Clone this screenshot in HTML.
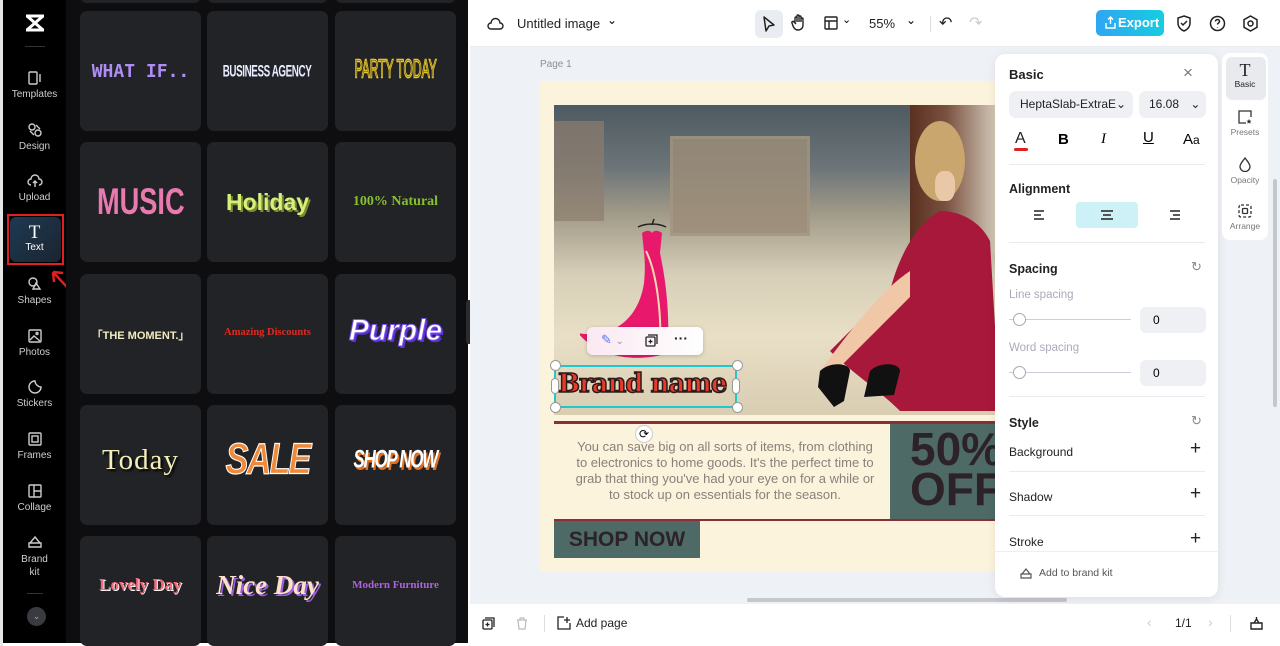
<!DOCTYPE html>
<html><head><meta charset="utf-8"><style>
*{margin:0;padding:0;box-sizing:border-box}
body{width:1280px;height:646px;overflow:hidden;background:#fff;font-family:"Liberation Sans",sans-serif;position:relative}
.abs{position:absolute}
.rail{left:3px;top:0;width:63px;height:643px;background:#000}
.ri{position:absolute;left:0;width:63px;text-align:center;color:#cfcfcf;font-size:10px}
.ri svg{display:block;margin:0 auto 3px}
.panel{left:66px;top:0;width:402px;height:643px;background:#0e0e10}
.card{position:absolute;width:121px;height:120px;background:#222327;border-radius:7px;display:flex;align-items:center;justify-content:center;text-align:center;font-weight:bold;white-space:nowrap;overflow:hidden}
.card span{display:inline-block}
.top{left:470px;top:0;width:810px;height:47px;background:#fff;border-bottom:1px solid #e8ebef}
.main{left:470px;top:47px;width:810px;height:557px;background:#eef1f5}
.bot{left:470px;top:604px;width:807px;height:39px;background:#fff}
.ptxt{font-size:13px;color:#222}
.sec{font-size:12.5px;font-weight:bold;color:#222}
.lbl{font-size:12px;color:#222}
.hr{position:absolute;left:14px;width:196px;height:1px;background:#e8eaee}
</style></head><body>
<div class="abs rail">
 <svg class="abs" style="left:20px;top:12px" width="24" height="22" viewBox="0 0 24 22"><path d="M3 4h18M3 18h18M4 4l16 14M20 4L4 18" stroke="#fff" stroke-width="3" fill="none"/></svg>
 <div class="abs" style="left:22px;top:46px;width:20px;height:1px;background:#333"></div>
 <div class="ri" style="top:70px"><svg width="16" height="16" viewBox="0 0 16 16" fill="none" stroke="#ccc" stroke-width="1.4"><rect x="2" y="2" width="8" height="12" rx="1"/><path d="M13 4v8"/></svg>Templates</div>
 <div class="ri" style="top:122px"><svg width="16" height="16" viewBox="0 0 16 16" fill="none" stroke="#ccc" stroke-width="1.4"><circle cx="5" cy="5" r="3"/><circle cx="11" cy="11" r="3"/><path d="M9 3l4 4M3 9l4 4"/></svg>Design</div>
 <div class="ri" style="top:173px"><svg width="16" height="16" viewBox="0 0 16 16" fill="none" stroke="#ccc" stroke-width="1.4"><path d="M4 12a3 3 0 010-6 4 4 0 018 0 3 3 0 010 6M8 8v6M6 10l2-2 2 2"/></svg>Upload</div>
 <div class="abs" style="left:4px;top:214px;width:57px;height:51px;border:2px solid #e02020"></div>
 <div class="abs" style="left:7px;top:217px;width:51px;height:45px;background:linear-gradient(135deg,#1e3a52,#1b2430);border-radius:6px"></div>
 <div class="ri" style="top:224px;color:#fff;font-size:10px"><div style="font-family:'Liberation Serif',serif;font-size:19px;line-height:18px">T</div>Text</div>
 <svg class="abs" style="left:46px;top:268px" width="32" height="34" viewBox="0 0 32 34"><path d="M30 32L4 4M4 4l1 10M4 4l10 1" stroke="#e02020" stroke-width="2.5" fill="none"/></svg>
 <div class="ri" style="top:276px"><svg width="16" height="16" viewBox="0 0 16 16" fill="none" stroke="#ccc" stroke-width="1.4"><circle cx="6" cy="6" r="4"/><path d="M9 7l4 6H6z"/></svg>Shapes</div>
 <div class="ri" style="top:328px"><svg width="16" height="16" viewBox="0 0 16 16" fill="none" stroke="#ccc" stroke-width="1.4"><rect x="2" y="2" width="12" height="12" rx="1"/><path d="M3 12l4-4 6 5"/><circle cx="10" cy="5.5" r="1"/></svg>Photos</div>
 <div class="ri" style="top:379px"><svg width="16" height="16" viewBox="0 0 16 16" fill="none" stroke="#ccc" stroke-width="1.4"><path d="M14 8A6 6 0 118 2c0 3 3 6 6 6z"/></svg>Stickers</div>
 <div class="ri" style="top:431px"><svg width="16" height="16" viewBox="0 0 16 16" fill="none" stroke="#ccc" stroke-width="1.4"><rect x="2" y="2" width="12" height="12" rx="1"/><rect x="5" y="5" width="6" height="6"/></svg>Frames</div>
 <div class="ri" style="top:483px"><svg width="16" height="16" viewBox="0 0 16 16" fill="none" stroke="#ccc" stroke-width="1.4"><rect x="2" y="2" width="12" height="12" rx="1"/><path d="M7 2v12M7 8h7"/></svg>Collage</div>
 <div class="ri" style="top:534px;line-height:13px"><svg width="16" height="16" viewBox="0 0 16 16" fill="none" stroke="#ccc" stroke-width="1.4"><path d="M2 9h12v4H2zM3 9l5-6 5 6"/></svg>Brand<br>kit</div>
 <div class="abs" style="left:24px;top:593px;width:16px;height:1px;background:#333"></div>
 <div class="abs" style="left:24px;top:607px;width:19px;height:19px;border-radius:50%;background:#3a3b40;color:#aaa;font-size:9px;text-align:center;line-height:19px">⌄</div>
</div>
<div class="abs" style="left:0;top:0;width:3px;height:646px;background:#e6e6e6"></div>
<div class="abs panel">
 <div class="card" style="left:14px;top:-14px;height:17px"></div><div class="card" style="left:141px;top:-14px;height:17px"></div><div class="card" style="left:269px;top:-14px;height:17px"></div>
 <div class="card" style="left:14px;top:11px;color:#b08cf5;font-size:18px;font-family:'DejaVu Sans Mono',monospace">WHAT IF..</div>
 <div class="card" style="left:141px;top:11px;color:#e8ecff;font-size:12px"><span style="transform:scale(.82,1.4);letter-spacing:-.5px">BUSINESS AGENCY</span></div>
 <div class="card" style="left:269px;top:11px;color:#1a1a1a;font-size:16px;-webkit-text-stroke:1px #e6c52c;font-weight:normal"><span style="transform:scale(.75,1.6)">PARTY TODAY</span></div>
 <div class="card" style="left:14px;top:142px;color:#e87ab0;font-size:34px;text-shadow:2px 2px 0 #222"><span style="transform:scale(.8,1.1)">MUSIC</span></div>
 <div class="card" style="left:141px;top:142px;color:#d6f07a;font-size:23px;text-shadow:2px 2px 0 #7a8a30">Holiday</div>
 <div class="card" style="left:269px;top:142px;color:#88c030;font-size:14px;font-family:'Liberation Serif',serif">100% Natural</div>
 <div class="card" style="left:14px;top:274px;color:#f0ecc0;font-size:11px;align-items:flex-start;padding-top:53px">「THE MOMENT.」</div>
 <div class="card" style="left:141px;top:274px;color:#e02a20;font-size:10.5px;font-family:'Liberation Serif',serif;align-items:flex-start;padding-top:53px">Amazing Discounts</div>
 <div class="card" style="left:269px;top:274px;color:#fff;font-size:30px;font-style:italic;-webkit-text-stroke:1px #7a50f0;text-shadow:2px 2px 0 #5a30d0;align-items:flex-start;padding-top:40px">Purple</div>
 <div class="card" style="left:14px;top:405px;color:#f4eeb8;font-size:29px;font-weight:normal;font-family:'Liberation Serif',serif;letter-spacing:1px;text-shadow:2px 2px 2px #000;padding-bottom:10px">Today</div>
 <div class="card" style="left:141px;top:405px;color:#ef8a3a;font-size:38px;font-style:italic;-webkit-text-stroke:1px #fff;padding-bottom:10px"><span style="transform:scale(.9,1.15);letter-spacing:-2px">SALE</span></div>
 <div class="card" style="left:269px;top:405px;color:#fff;font-size:20px;font-style:italic;text-shadow:2px 2px 0 #e07020;padding-bottom:10px"><span style="transform:scale(.85,1.25);letter-spacing:-1.5px">SHOP NOW</span></div>
 <div class="card" style="left:14px;top:536px;height:110px;color:#f06a7a;font-size:17px;font-family:'Liberation Serif',serif;text-shadow:1px 1px 0 #fff;padding-bottom:12px">Lovely Day</div>
 <div class="card" style="left:141px;top:536px;height:110px;color:#fde0c8;font-size:27px;font-style:italic;font-family:'Liberation Serif',serif;text-shadow:2px 2px 0 #9a60e0;padding-bottom:12px">Nice Day</div>
 <div class="card" style="left:269px;top:536px;height:110px;color:#b060e0;font-size:11px;font-family:'Liberation Serif',serif;padding-bottom:12px">Modern Furniture</div>
</div>
<div class="abs" style="left:466px;top:300px;width:7px;height:44px;background:#2a2b2e;border-radius:3px"></div>

<div class="abs top">
 <svg class="abs" style="left:17px;top:16px" width="17" height="15" viewBox="0 0 17 15" fill="none" stroke="#222" stroke-width="1.4"><path d="M4 13a3 3 0 010-6 4.5 4.5 0 019 0 3 3 0 010 6z"/></svg>
 <div class="abs ptxt" style="left:47px;top:16px">Untitled image</div>
 <div class="abs" style="left:137px;top:13px;font-size:12px">⌄</div>
 <div class="abs" style="left:285px;top:10px;width:28px;height:28px;background:#e9ecf0;border-radius:6px"></div>
 <svg class="abs" style="left:292px;top:15px" width="14" height="18" viewBox="0 0 14 18"><path d="M2 2l10 8-5 1-3 5z" fill="none" stroke="#222" stroke-width="1.5" stroke-linejoin="round"/></svg>
 <svg class="abs" style="left:321px;top:14px" width="16" height="18" viewBox="0 0 16 18" fill="none" stroke="#222" stroke-width="1.4"><path d="M4 9V4a1 1 0 012 0v4M6 8V2a1 1 0 012 0v6M8 8V3a1 1 0 012 0v5M10 8V5a1 1 0 012 0v6c0 3-2 5-5 5s-4-2-5-4l-1-3a1 1 0 012-1l2 2"/></svg>
 <svg class="abs" style="left:354px;top:16px" width="14" height="14" viewBox="0 0 14 14" fill="none" stroke="#222" stroke-width="1.4"><rect x="1" y="1" width="12" height="12" rx="1"/><path d="M1 5h12M5 5v8"/></svg>
 <div class="abs" style="left:372px;top:13px;font-size:11px">⌄</div>
 <div class="abs ptxt" style="left:399px;top:16px">55%</div>
 <div class="abs" style="left:436px;top:13px;font-size:12px">⌄</div>
 <div class="abs" style="left:460px;top:16px;width:1px;height:16px;background:#ddd"></div>
 <div class="abs" style="left:469px;top:13px;font-size:16px;color:#222">↶</div>
 <div class="abs" style="left:499px;top:13px;font-size:16px;color:#ccc">↷</div>
 <div class="abs" style="left:626px;top:10px;width:68px;height:26px;border-radius:5px;background:linear-gradient(90deg,#2fa6f2,#16cde0);color:#fff;font-size:13px;font-weight:bold;line-height:26px;padding-left:22px">Export</div>
 <svg class="abs" style="left:635px;top:16px" width="11" height="13" viewBox="0 0 11 13" fill="none" stroke="#fff" stroke-width="1.4"><path d="M5.5 8V1M3 3.5l2.5-2.5 2.5 2.5M1 7v5h9V7"/></svg>
 <svg class="abs" style="left:706px;top:15px" width="16" height="17" viewBox="0 0 16 17" fill="none" stroke="#222" stroke-width="1.5"><path d="M8 1l6 2v5c0 4-3 7-6 8-3-1-6-4-6-8V3z M5 8l2 2 4-4"/></svg>
 <svg class="abs" style="left:739px;top:15px" width="17" height="17" viewBox="0 0 17 17" fill="none" stroke="#222" stroke-width="1.5"><circle cx="8.5" cy="8.5" r="7"/><path d="M6.5 6.5a2 2 0 114 0c0 1.5-2 1.5-2 3M8.5 12v.5"/></svg>
 <svg class="abs" style="left:772px;top:15px" width="17" height="17" viewBox="0 0 17 17" fill="none" stroke="#222" stroke-width="1.5"><path d="M8.5 1l6.5 3.7v7.6L8.5 16 2 12.3V4.7z"/><circle cx="8.5" cy="8.5" r="2.5"/></svg>
</div>

<div class="abs main">
 <div class="abs" style="left:70px;top:12px;font-size:10px;color:#8a9099">Page 1</div>
 <div class="abs" style="left:70px;top:34px;width:460px;height:490px;background:#fcf3dc;overflow:hidden">
  <div class="abs" style="left:14px;top:24px;width:460px;height:310px;background:linear-gradient(180deg,#4d5a60 0%,#6c7478 20%,#a09a88 35%,#d8cfb8 55%,#e8dfc6 75%,#d9cdb2 100%)"></div>
  <div class="abs" style="left:14px;top:40px;width:50px;height:100px;background:#8d7e6e;opacity:.7"></div>
  <div class="abs" style="left:130px;top:55px;width:140px;height:100px;background:#9c8d79;border:3px solid #a39680;opacity:.85"></div>
  <div class="abs" style="left:370px;top:24px;width:90px;height:150px;background:linear-gradient(90deg,#5a3020,#7a5040 40%,#d9d2c2)"></div>
  <div class="abs" style="left:375px;top:40px;width:50px;height:80px;border-radius:50%;background:#c8a66e"></div>
  <div class="abs" style="left:395px;top:90px;width:20px;height:30px;background:#e8c8a8;border-radius:40%"></div>
  <svg class="abs" style="left:260px;top:110px" width="200" height="224" viewBox="0 0 200 224"><path d="M140 20c20 0 40 10 50 30l10 170H100c-20-20-50-40-70-60 20-20 40-40 60-60 10-40 30-70 50-80z" fill="#a8183a"/><path d="M110 80c-30 20-60 60-90 100l10 6c30-30 60-60 80-80z" fill="#f0c8a8"/><path d="M20 180c10-10 30-8 30 0l-6 30-10 6-16-20z" fill="#111"/><path d="M70 180c10-10 30-8 30 0l-6 24-30 2z" fill="#111"/></svg>
  <svg class="abs" style="left:40px;top:130px" width="120" height="160" viewBox="0 0 120 160"><path d="M74 8l-2 6m-14 2c8-4 20-4 28 0" stroke="#222" fill="none" stroke-width="1.5"/><path d="M62 22c4-3 8-3 10 0 2-3 6-3 10 0l-2 20c4 20 10 50 8 100-30 10-70 5-90-20 30 6 60-10 66-50 2-20 0-30-2-50z" fill="#e8196c"/><path d="M66 40c10 20 16 60 14 100" stroke="#f5d9b0" stroke-width="2" fill="none"/></svg>
  <div class="abs" style="left:14px;top:340px;width:460px;height:3px;background:#8d2c3a"></div>
  <div class="abs" style="left:350px;top:343px;width:110px;height:96px;background:#4d6a66"></div>
  <div class="abs" style="left:370px;top:348px;color:#2d2228;font-size:46px;font-weight:bold;line-height:40px">50%<br>OFF</div>
  <div class="abs" style="left:22px;top:358px;width:326px;text-align:center;color:#8a807a;font-size:13px;line-height:16px;padding:0 8px">You can save big on all sorts of items, from clothing to electronics to home goods. It's the perfect time to grab that thing you've had your eye on for a while or to stock up on essentials for the season.</div>
  <div class="abs" style="left:14px;top:438px;width:460px;height:2px;background:#8d2c3a"></div>
  <div class="abs" style="left:14px;top:440px;width:146px;height:37px;background:#4d6a66;color:#2d2228;font-size:21px;font-weight:bold;line-height:37px;text-align:center">SHOP NOW</div>
 </div>
 <div class="abs" style="left:84px;top:318px;width:183px;height:43px;border:2px solid #1ec8d0"></div>
 <div class="abs" style="left:88px;top:322px;color:#e83a2a;font-size:26px;font-weight:bold;font-family:'DejaVu Serif',serif;-webkit-text-stroke:1.5px #2a1a1a;letter-spacing:-1px">Brand name</div>
 <div class="abs" style="left:80px;top:313px;width:11px;height:11px;border-radius:50%;background:#fff;border:1px solid #999"></div>
 <div class="abs" style="left:262px;top:313px;width:11px;height:11px;border-radius:50%;background:#fff;border:1px solid #999"></div>
 <div class="abs" style="left:80px;top:355px;width:11px;height:11px;border-radius:50%;background:#fff;border:1px solid #999"></div>
 <div class="abs" style="left:262px;top:355px;width:11px;height:11px;border-radius:50%;background:#fff;border:1px solid #999"></div>
 <div class="abs" style="left:81px;top:331px;width:8px;height:16px;border-radius:4px;background:#fff;border:1px solid #999"></div>
 <div class="abs" style="left:262px;top:331px;width:8px;height:16px;border-radius:4px;background:#fff;border:1px solid #999"></div>
 <div class="abs" style="left:165px;top:378px;width:18px;height:18px;border-radius:50%;background:#fff;border:1px solid #ccc;font-size:12px;text-align:center;line-height:16px">⟳</div>
 <div class="abs" style="left:117px;top:280px;width:116px;height:28px;background:linear-gradient(90deg,#fbe8f2,#fff);border-radius:6px;box-shadow:0 1px 4px rgba(0,0,0,.2)"></div>
 <div class="abs" style="left:131px;top:285px;color:#5a7ae8;font-size:13px">✎ <span style="color:#999;font-size:10px">⌄</span></div>
 <svg class="abs" style="left:175px;top:287px" width="13" height="13" viewBox="0 0 13 13" fill="none" stroke="#222" stroke-width="1.3"><rect x="1" y="3" width="9" height="9" rx="1"/><path d="M3 1h9v9M5.5 5.5v4M3.5 7.5h4"/></svg>
 <div class="abs" style="left:204px;top:283px;font-size:14px;font-weight:bold;color:#222">···</div>

 <div class="abs" style="left:277px;top:551px;width:320px;height:4px;background:#c4c7cc;border-radius:2px"></div>
 <div class="abs" style="left:803px;top:132px;width:4px;height:228px;background:#c4c7cc;border-radius:2px"></div>

 <div class="abs" style="left:525px;top:7px;width:223px;height:543px;background:#fff;border-radius:10px;box-shadow:0 2px 10px rgba(0,0,0,.08)">
  <div class="abs sec" style="left:14px;top:13px;font-size:13px">Basic</div>
  <div class="abs" style="left:188px;top:9px;font-size:17px;color:#777">×</div>
  <div class="abs" style="left:14px;top:37px;width:124px;height:27px;background:#eef0f3;border-radius:7px;font-size:12px;line-height:27px;padding-left:11px;color:#222">HeptaSlab-ExtraE⌄</div>
  <div class="abs" style="left:144px;top:37px;width:67px;height:27px;background:#eef0f3;border-radius:7px;font-size:12px;line-height:27px;padding-left:10px;color:#222">16.08 <span style="margin-left:8px">⌄</span></div>
  <div class="abs" style="left:20px;top:76px;font-size:16px;color:#222">A</div>
  <div class="abs" style="left:19px;top:94px;width:14px;height:3px;background:#e02020;border-radius:2px"></div>
  <div class="abs" style="left:63px;top:77px;font-size:15px;font-weight:bold">B</div>
  <div class="abs" style="left:106px;top:77px;font-size:15px;font-style:italic;font-family:'Liberation Serif',serif">I</div>
  <div class="abs" style="left:148px;top:75px;font-size:15px;text-decoration:underline">U</div>
  <div class="abs" style="left:188px;top:77px;font-size:15px">A<span style="font-size:12px">a</span></div>
  <div class="hr" style="top:110px"></div>
  <div class="abs sec" style="left:14px;top:128px">Alignment</div>
  <div class="abs" style="left:81px;top:148px;width:62px;height:26px;background:#cdf1f7;border-radius:4px"></div>
  <svg class="abs" style="left:38px;top:155px" width="14" height="12"><path d="M1 2h10M1 6h7M1 10h10" stroke="#222" stroke-width="1.4"/></svg>
  <svg class="abs" style="left:105px;top:155px" width="14" height="12"><path d="M1 2h12M3 6h8M1 10h12" stroke="#222" stroke-width="1.4"/></svg>
  <svg class="abs" style="left:172px;top:155px" width="14" height="12"><path d="M3 2h10M6 6h7M3 10h10" stroke="#222" stroke-width="1.4"/></svg>
  <div class="hr" style="top:188px"></div>
  <div class="abs sec" style="left:14px;top:208px">Spacing</div>
  <div class="abs" style="left:196px;top:205px;font-size:13px;color:#888">↻</div>
  <div class="abs" style="left:14px;top:235px;font-size:11.5px;color:#aab">Line spacing</div>
  <div class="abs" style="left:14px;top:265px;width:122px;height:1px;background:#ccd"></div>
  <div class="abs" style="left:18px;top:259px;width:13px;height:13px;border-radius:50%;background:#fff;border:1px solid #aaa"></div>
  <div class="abs" style="left:145px;top:253px;width:66px;height:26px;background:#eef0f3;border-radius:6px;font-size:12px;line-height:26px;padding-left:13px">0</div>
  <div class="abs" style="left:14px;top:288px;font-size:11.5px;color:#aab">Word spacing</div>
  <div class="abs" style="left:14px;top:318px;width:122px;height:1px;background:#ccd"></div>
  <div class="abs" style="left:18px;top:312px;width:13px;height:13px;border-radius:50%;background:#fff;border:1px solid #aaa"></div>
  <div class="abs" style="left:145px;top:306px;width:66px;height:26px;background:#eef0f3;border-radius:6px;font-size:12px;line-height:26px;padding-left:13px">0</div>
  <div class="hr" style="top:342px"></div>
  <div class="abs sec" style="left:14px;top:362px">Style</div>
  <div class="abs" style="left:196px;top:359px;font-size:13px;color:#888">↻</div>
  <div class="abs lbl" style="left:14px;top:391px">Background</div><div class="abs" style="left:195px;top:384px;font-size:19px;color:#222">+</div>
  <div class="hr" style="top:417px"></div>
  <div class="abs lbl" style="left:14px;top:436px">Shadow</div><div class="abs" style="left:195px;top:429px;font-size:19px;color:#222">+</div>
  <div class="hr" style="top:461px"></div>
  <div class="abs lbl" style="left:14px;top:481px">Stroke</div><div class="abs" style="left:195px;top:474px;font-size:19px;color:#222">+</div>
  <div class="abs" style="left:0;top:497px;width:223px;height:1px;background:#eceef1"></div>
  <svg class="abs" style="left:25px;top:514px" width="12" height="11" viewBox="0 0 12 11" fill="none" stroke="#555" stroke-width="1.2"><path d="M1 6h10v4H1zM2 6l4-5 4 5"/></svg>
  <div class="abs" style="left:44px;top:513px;font-size:10.5px;color:#555">Add to brand kit</div>
 </div>
 <div class="abs" style="left:752px;top:6px;width:46px;height:187px;background:#fff;border-radius:8px"></div>
 <div class="abs" style="left:756px;top:10px;width:40px;height:43px;background:#e8eaee;border-radius:6px"></div>
 <div class="abs" style="left:752px;top:14px;width:46px;text-align:center;font-size:8.5px;color:#222"><div style="font-family:'Liberation Serif',serif;font-size:18px;line-height:18px">T</div>Basic</div>
 <div class="abs" style="left:752px;top:63px;width:46px;text-align:center;font-size:8.5px;color:#777"><svg width="14" height="14" viewBox="0 0 14 14" fill="none" stroke="#333" stroke-width="1.3" style="display:block;margin:0 auto 3px"><path d="M8 13H1V1h12v6"/><path d="M11 9l.8 1.6 1.7.2-1.3 1.1.4 1.7-1.6-.9-1.6.9.4-1.7-1.3-1.1 1.7-.2z" fill="#333" stroke="none"/></svg>Presets</div>
 <div class="abs" style="left:752px;top:110px;width:46px;text-align:center;font-size:8.5px;color:#777"><svg width="14" height="15" viewBox="0 0 14 15" fill="none" stroke="#333" stroke-width="1.3" style="display:block;margin:0 auto 3px"><path d="M7 1C4 5 2 7 2 9.5a5 5 0 0010 0C12 7 10 5 7 1z"/></svg>Opacity</div>
 <div class="abs" style="left:752px;top:157px;width:46px;text-align:center;font-size:8.5px;color:#777"><svg width="14" height="14" viewBox="0 0 14 14" fill="none" stroke="#333" stroke-width="1.3" style="display:block;margin:0 auto 3px"><rect x="1" y="1" width="12" height="12" rx="2" stroke-dasharray="3 2"/><rect x="4.5" y="4.5" width="5" height="5" rx="1"/></svg>Arrange</div>
</div>

<div class="abs bot">
 <svg class="abs" style="left:12px;top:13px" width="13" height="13" viewBox="0 0 13 13" fill="none" stroke="#222" stroke-width="1.3"><rect x="1" y="3" width="9" height="9" rx="1"/><path d="M3 1h9v9M5.5 5.5v4M3.5 7.5h4"/></svg>
 <svg class="abs" style="left:46px;top:13px" width="12" height="13" viewBox="0 0 12 13" fill="none" stroke="#bbb" stroke-width="1.2"><path d="M1 3h10M4 3V1h4v2M2 3l1 9h6l1-9"/></svg>
 <div class="abs" style="left:74px;top:11px;width:1px;height:17px;background:#ddd"></div>
 <svg class="abs" style="left:87px;top:12px" width="14" height="14" viewBox="0 0 14 14" fill="none" stroke="#222" stroke-width="1.3"><path d="M13 7v6H1V1h6M10 1v6M7 4h6"/></svg>
 <div class="abs" style="left:106px;top:12px;font-size:12px;color:#222">Add page</div>
 <div class="abs" style="left:677px;top:10px;font-size:14px;color:#ccc">‹</div>
 <div class="abs" style="left:705px;top:12px;font-size:12px;color:#222">1/1</div>
 <div class="abs" style="left:738px;top:10px;font-size:14px;color:#ccc">›</div>
 <div class="abs" style="left:760px;top:11px;width:1px;height:17px;background:#ddd"></div>
 <svg class="abs" style="left:779px;top:12px" width="15" height="15" viewBox="0 0 15 15" fill="none" stroke="#222" stroke-width="1.4"><path d="M2 7h11v6H2zM5 7l2.5-4L10 7M7.5 3V1"/></svg>
</div>
</body></html>
